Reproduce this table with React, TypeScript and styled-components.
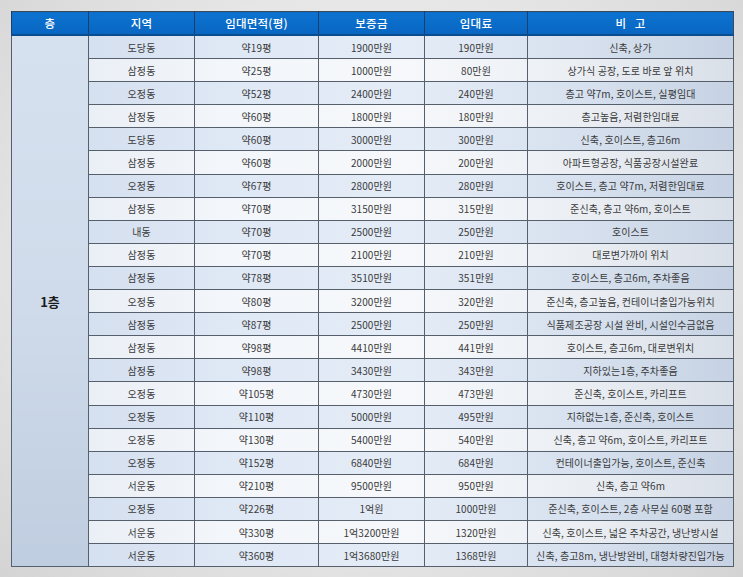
import React from "react";
import styled, { createGlobalStyle } from "styled-components";

const Global = createGlobalStyle`
  html, body { margin: 0; padding: 0; }
  body {
    width: 743px;
    height: 577px;
    overflow: hidden;
    background: radial-gradient(ellipse at 50% 45%, #f0f0f0 0%, #e6e6e6 60%, #d4d4d4 100%);
    font-family: "Noto Sans CJK KR", "Noto Sans", sans-serif;
  }
`;

const Page = styled.div`
  padding: 11px 0 0 11px;
`;

const Table = styled.table`
  border-collapse: collapse;
  table-layout: fixed;
  width: 722px;
  border: 1px solid #3c4a5a;
`;

const HeadCell = styled.th`
  height: 22px;
  padding: 0;
  background: linear-gradient(to bottom, #0d73d0 0%, #0866c2 100%);
  color: #ffffff;
  font-size: 11.5px;
  font-weight: 500;
  text-align: center;
  border-left: 1px solid #1a3f6a;
  border-bottom: 2px solid #0a4c8c;
  letter-spacing: 0.2px;
`;

const Row = styled.tr<{ $tint: boolean }>`
  background: ${(p) =>
    p.$tint
      ? "linear-gradient(to right, #cfdbed 0%, #dfe8f5 30%, #e4ecf7 55%, #d6e0ee 80%, #c6d2e3 100%)"
      : "linear-gradient(to right, #e6ecf4 0%, #f3f6fa 30%, #f6f8fb 55%, #eaeef3 80%, #d9dfe8 100%)"};
`;

const Cell = styled.td`
  height: 22.1px;
  padding: 0;
  text-align: center;
  font-size: 10px;
  color: #3a3a3a;
  border: 1px solid #55606c;
  white-space: nowrap;
  letter-spacing: 0.1px;
`;

const FloorCell = styled.td`
  padding: 0;
  text-align: center;
  vertical-align: middle;
  font-size: 13px;
  font-weight: 700;
  color: #1b1b1b;
  border: 1px solid #55606c;
  background: linear-gradient(to bottom, #d6e1f0 0%, #cfdbea 50%, #bfcde0 100%);
`;

const rows: [string, string, string, string, string][] = [
  ["도당동", "약19평", "1900만원", "190만원", "신축, 상가"],
  ["삼정동", "약25평", "1000만원", "80만원", "상가식 공장, 도로 바로 앞 위치"],
  ["오정동", "약52평", "2400만원", "240만원", "층고 약7m, 호이스트, 실평임대"],
  ["삼정동", "약60평", "1800만원", "180만원", "층고높음, 저렴한임대료"],
  ["도당동", "약60평", "3000만원", "300만원", "신축, 호이스트, 층고6m"],
  ["삼정동", "약60평", "2000만원", "200만원", "아파트형공장, 식품공장시설완료"],
  ["오정동", "약67평", "2800만원", "280만원", "호이스트, 층고 약7m, 저렴한임대료"],
  ["삼정동", "약70평", "3150만원", "315만원", "준신축, 층고 약6m, 호이스트"],
  ["내동", "약70평", "2500만원", "250만원", "호이스트"],
  ["삼정동", "약70평", "2100만원", "210만원", "대로변가까이 위치"],
  ["삼정동", "약78평", "3510만원", "351만원", "호이스트, 층고6m, 주차좋음"],
  ["오정동", "약80평", "3200만원", "320만원", "준신축, 층고높음, 컨테이너출입가능위치"],
  ["삼정동", "약87평", "2500만원", "250만원", "식품제조공장 시설 완비, 시설인수금없음"],
  ["삼정동", "약98평", "4410만원", "441만원", "호이스트, 층고6m, 대로변위치"],
  ["삼정동", "약98평", "3430만원", "343만원", "지하있는1층, 주차좋음"],
  ["오정동", "약105평", "4730만원", "473만원", "준신축, 호이스트, 카리프트"],
  ["오정동", "약110평", "5000만원", "495만원", "지하없는1층, 준신축, 호이스트"],
  ["오정동", "약130평", "5400만원", "540만원", "신축, 층고 약6m, 호이스트, 카리프트"],
  ["오정동", "약152평", "6840만원", "684만원", "컨테이너출입가능, 호이스트, 준신축"],
  ["서운동", "약210평", "9500만원", "950만원", "신축, 층고 약6m"],
  ["오정동", "약226평", "1억원", "1000만원", "준신축, 호이스트, 2층 사무실 60평 포함"],
  ["서운동", "약330평", "1억3200만원", "1320만원", "신축, 호이스트, 넓은 주차공간, 냉난방시설"],
  ["서운동", "약360평", "1억3680만원", "1368만원", "신축, 층고8m, 냉난방완비, 대형차량진입가능"],
];

const widths = [77, 106, 124, 106, 103, 206];
const heads = ["층", "지역", "임대면적(평)", "보증금", "임대료", "비   고"];

export default function App() {
  return (
    <>
      <Global />
      <Page>
        <Table>
          <colgroup>
            {widths.map((w, i) => (
              <col key={i} style={{ width: w }} />
            ))}
          </colgroup>
          <thead>
            <tr>
              {heads.map((h) => (
                <HeadCell key={h} style={{ whiteSpace: "pre" }}>
                  {h}
                </HeadCell>
              ))}
            </tr>
          </thead>
          <tbody>
            {rows.map((r, i) => (
              <Row key={i} $tint={i % 2 === 0}>
                {i === 0 && <FloorCell rowSpan={rows.length}>1층</FloorCell>}
                {r.map((c, j) => (
                  <Cell key={j}>{c}</Cell>
                ))}
              </Row>
            ))}
          </tbody>
        </Table>
      </Page>
    </>
  );
}
